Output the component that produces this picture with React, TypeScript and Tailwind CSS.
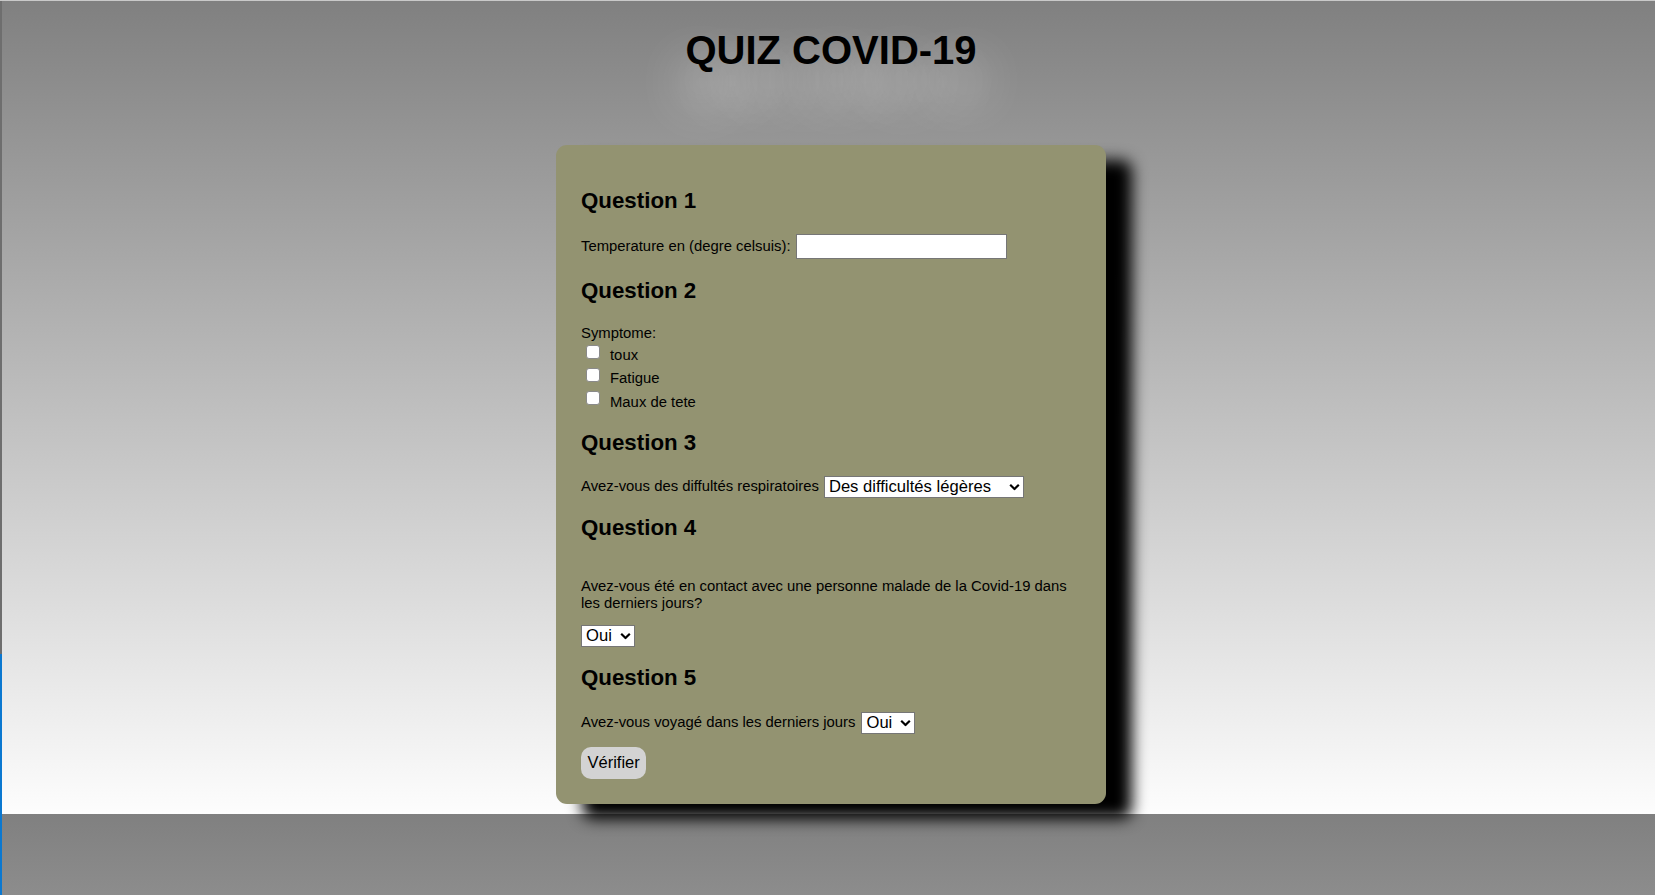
import type { ReactNode } from "react";

function Chevron() {
  return (
    <svg
      viewBox="0 0 11 7"
      className="pointer-events-none absolute right-[4px] top-1/2 h-[7px] w-[11px] -translate-y-1/2"
    >
      <polyline
        points="1.2,1.2 5.5,5.5 9.8,1.2"
        fill="none"
        stroke="#000"
        strokeWidth="2.2"
      />
    </svg>
  );
}

function Select({
  width,
  options,
  value,
}: {
  width: string;
  options: string[];
  value: string;
}) {
  return (
    <div className={`relative inline-block h-[22px] ${width}`}>
      <select
        defaultValue={value}
        className="h-[22px] w-full appearance-none border border-[#767676] bg-white pl-[4px] text-[16.6px] leading-[20px] text-black outline-none"
      >
        {options.map((o) => (
          <option key={o}>{o}</option>
        ))}
      </select>
      <Chevron />
    </div>
  );
}

function Title({ children, className = "" }: { children: ReactNode; className?: string }) {
  return (
    <h2 className={`text-[22.3px] leading-[26px] font-bold ${className}`}>
      {children}
    </h2>
  );
}

export default function App() {
  const symptoms = ["toux", "Fatigue", "Maux de tete"];

  return (
    <div className="flex h-[895px] w-full overflow-hidden border-t border-[#c9c9c9] font-['Liberation_Sans',Arial,sans-serif] text-black">
      <div className="w-[2px] shrink-0 bg-[linear-gradient(to_bottom,#6e6e6e_0px,#6e6e6e_653px,#0b78d0_653px,#0b78d0_100%)]" />

      <div className="flex-1 bg-[linear-gradient(to_bottom,#808080,#fdfdfd)] bg-[length:100%_813px] bg-repeat pl-[5px]">
        <h1 className="pt-[26px] text-center text-[40px] leading-[46px] font-bold [text-shadow:0_30px_50px_rgba(255,255,255,0.9)]">
          QUIZ COVID-19
        </h1>

        <form className="relative z-10 mx-auto mt-[72px] w-[550px] rounded-[11px] bg-[#939371] px-[25px] pt-[43px] pb-[25px] text-[14.85px] leading-[17px] shadow-[26px_15px_15px_#000]">
          {/* Question 1 */}
          <Title>Question 1</Title>
          <div className="mt-[20px] flex h-[25px] items-center">
            <label>Temperature en (degre celsuis):</label>
            <input
              type="text"
              className="ml-[5px] h-[25px] w-[211px] border border-[#767676] bg-white outline-none"
            />
          </div>

          {/* Question 2 */}
          <Title className="mt-[19px]">Question 2</Title>
          <p className="mt-[21px]">Symptome:</p>
          <div className="mt-[2px]">
            {symptoms.map((s) => (
              <label key={s} className="flex h-[23.33px] items-center">
                <input
                  type="checkbox"
                  className="mb-[8px] ml-[5px] mr-[10px] h-[14px] w-[14px] appearance-none rounded-[3px] border border-[#8a8a8a] bg-white"
                />
                <span>{s}</span>
              </label>
            ))}
          </div>

          {/* Question 3 */}
          <Title className="mt-[16px]">Question 3</Title>
          <div className="mt-[20px] flex h-[22px] items-center">
            <span>Avez-vous des diffultés respiratoires</span>
            <div className="ml-[5px] flex">
              <Select
                width="w-[200px]"
                value="Des difficultés légères"
                options={[
                  "Pas de difficultés",
                  "Des difficultés légères",
                  "Des difficultés graves",
                ]}
              />
            </div>
          </div>

          {/* Question 4 */}
          <Title className="mt-[17px]">Question 4</Title>
          <p className="mt-[37px]">
            Avez-vous été en contact avec une personne malade de la Covid-19
            dans les derniers jours?
          </p>
          <div className="mt-[13px] flex">
            <Select width="w-[54px]" value="Oui" options={["Oui", "Non"]} />
          </div>

          {/* Question 5 */}
          <Title className="mt-[18px]">Question 5</Title>
          <div className="mt-[21px] flex h-[22px] items-center">
            <span>Avez-vous voyagé dans les derniers jours</span>
            <div className="ml-[6px] flex">
              <Select width="w-[54px]" value="Oui" options={["Oui", "Non"]} />
            </div>
          </div>

          <button
            type="button"
            className="mt-[13px] h-[32px] rounded-[10px] bg-[#d3d3d3] px-[6.5px] text-[16.5px] text-black"
          >
            Vérifier
          </button>
        </form>
      </div>
    </div>
  );
}
